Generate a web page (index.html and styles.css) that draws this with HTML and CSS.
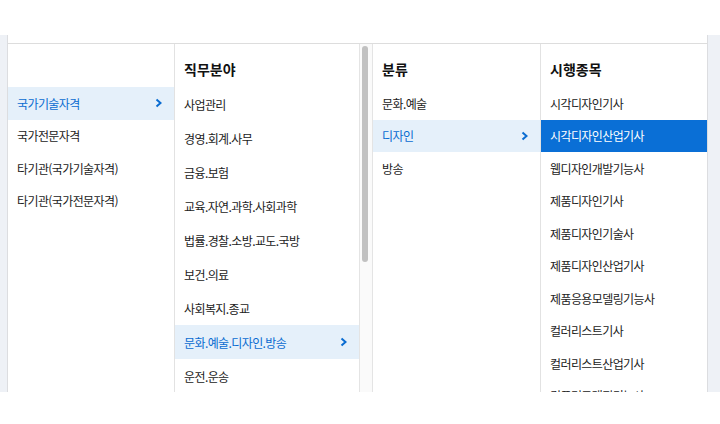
FILE: index.html
```
<!DOCTYPE html>
<html lang="ko">
<head>
    <meta charset="UTF-8">
    <meta name="viewport" content="width=device-width, initial-scale=1.0">
    <title>자격 선택</title>
    <link rel="stylesheet" href="styles.css">
</head>
<body>
    <div class="top"></div>
    <div class="panel">
        <div class="edge edge-left"></div>
        <div class="board">
            <div class="cols">
                <div class="col col-type">
                    <div class="col-head"></div>
                    <div class="item active">국가기술자격
                        <svg class="chev" width="7" height="10" viewBox="0 0 7 10"><polyline points="1.5,1.5 5.5,5 1.5,8.5"/></svg>
                    </div>
                    <div class="item">국가전문자격</div>
                    <div class="item">타기관(국가기술자격)</div>
                    <div class="item">타기관(국가전문자격)</div>
                </div>

                <div class="col col-field">
                    <div class="list">
                        <div class="col-head">직무분야</div>
                        <div class="item">사업관리</div>
                        <div class="item">경영.회계.사무</div>
                        <div class="item">금융.보험</div>
                        <div class="item">교육.자연.과학.사회과학</div>
                        <div class="item">법률.경찰.소방.교도.국방</div>
                        <div class="item">보건.의료</div>
                        <div class="item">사회복지.종교</div>
                        <div class="item active">문화.예술.디자인.방송
                            <svg class="chev" width="7" height="10" viewBox="0 0 7 10"><polyline points="1.5,1.5 5.5,5 1.5,8.5"/></svg>
                        </div>
                        <div class="item">운전.운송</div>
                    </div>
                    <div class="scrollbar"><div class="thumb"></div></div>
                </div>

                <div class="col col-sort">
                    <div class="col-head">분류</div>
                    <div class="item">문화.예술</div>
                    <div class="item active">디자인
                        <svg class="chev" width="7" height="10" viewBox="0 0 7 10"><polyline points="1.5,1.5 5.5,5 1.5,8.5"/></svg>
                    </div>
                    <div class="item">방송</div>
                </div>

                <div class="col col-exam">
                    <div class="col-head">시행종목</div>
                    <div class="item">시각디자인기사</div>
                    <div class="item selected">시각디자인산업기사</div>
                    <div class="item">웹디자인개발기능사</div>
                    <div class="item">제품디자인기사</div>
                    <div class="item">제품디자인기술사</div>
                    <div class="item">제품디자인산업기사</div>
                    <div class="item">제품응용모델링기능사</div>
                    <div class="item">컬러리스트기사</div>
                    <div class="item">컬러리스트산업기사</div>
                    <div class="item">컴퓨터그래픽기능사</div>
                </div>
            </div>
        </div>
        <div class="edge edge-right"></div>
    </div>
</body>
</html>
```

FILE: styles.css
```
body {
    margin: 0;
    background-color: #fff;
    color: #222;
    font-family: "Noto Sans CJK KR", "Noto Sans", sans-serif;
}
.top {
    height: 35px;
}
.panel {
    display: flex;
    height: 357px;
}
.edge {
    background-color: #eef1f6;
}
.edge-left {
    width: 7px;
}
.edge-right {
    width: 12px;
}
.board {
    flex: 1;
    display: flex;
    flex-direction: column;
    padding-top: 8px;
    border-left: 1px solid #dcdde0;
    border-right: 1px solid #dcdde0;
    background-color: #fff;
}
.cols {
    flex: 1;
    display: flex;
    border-top: 1px solid #dddddd;
    overflow: hidden;
}
.col {
    overflow: hidden;
}
.col-type {
    width: 166px;
    border-right: 1px solid #e2e2e2;
}
.col-field {
    width: 198px;
    display: flex;
}
.col-field .list {
    width: 186px;
}
.col-sort {
    width: 167px;
    border-right: 1px solid #e2e2e2;
}
.col-exam {
    width: 166px;
}
.col-head {
    height: 43px;
    box-sizing: border-box;
    padding: 15px 10px 0 9px;
    font-size: 14px;
    font-weight: 700;
    color: #111;
}
.item {
    height: 32.5px;
    display: flex;
    align-items: center;
    justify-content: space-between;
    padding: 0 10px 0 9px;
    font-size: 12px;
    letter-spacing: -0.6px;
    color: #222;
}
.col-field .item {
    height: 34px;
}
.item.active {
    background-color: #e5f0fa;
    color: #0a6cd1;
    padding-right: 12px;
}
.item.selected {
    background-color: #0a6fd6;
    color: #fff;
}
.chev polyline {
    fill: none;
    stroke: #0a6cd1;
    stroke-width: 2;
}
.scrollbar {
    width: 10px;
    border-left: 1px solid #e4e4e4;
    border-right: 1px solid #e4e4e4;
    background-color: #fafafa;
    padding: 2px 0 0 2px;
}
.thumb {
    width: 6px;
    height: 216px;
    border-radius: 4px;
    background-color: #c1c1c1;
}
```
